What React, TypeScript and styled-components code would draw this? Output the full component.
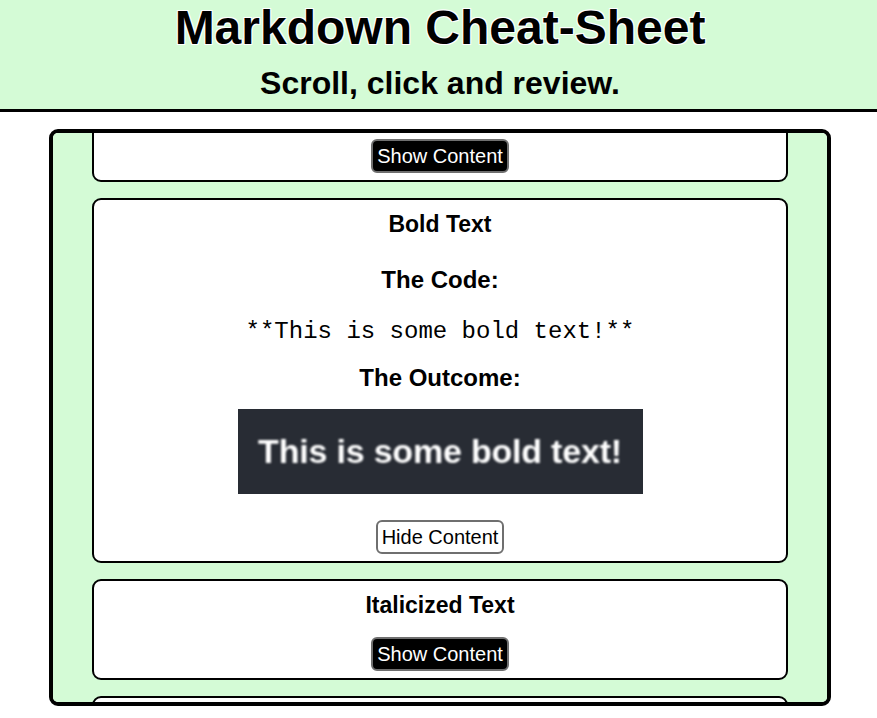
import { useState, useLayoutEffect, useRef } from 'react';
import styled, { createGlobalStyle } from 'styled-components';
import * as React from 'react';

interface Section {
  title: string;
  code: string;
  outcome: string;
  outcomeStyle?: React.CSSProperties;
}

const sections: Section[] = [
  {
    title: 'Headers',
    code: '# This is a header',
    outcome: 'This is a header',
  },
  {
    title: 'Bold Text',
    code: '**This is some bold text!**',
    outcome: 'This is some bold text!',
  },
  {
    title: 'Italicized Text',
    code: '*This is some italicized text!*',
    outcome: 'This is some italicized text!',
    outcomeStyle: { fontStyle: 'italic', fontWeight: 400 },
  },
  {
    title: 'Blockquotes',
    code: '> This is a blockquote',
    outcome: 'This is a blockquote',
  },
  {
    title: 'Links',
    code: '[GitHub](https://github.com)',
    outcome: 'GitHub',
  },
];

const GlobalStyle = createGlobalStyle`
  html, body {
    margin: 0;
    padding: 0;
    background: #ffffff;
    font-family: "Liberation Sans", Arial, Helvetica, sans-serif;
    color: #000;
  }
`;

const Header = styled.header`
  background: #d4fbd6;
  border-bottom: 3px solid #000;
  padding: 0 0 8px 3px;
  text-align: center;
`;

const Title = styled.h1`
  margin: 0;
  font-size: 48px;
  line-height: 56px;
  font-weight: 700;
  text-shadow: -1px -1px 0 #fff, 1px 1px 0 #fff, 1px -1px 0 #fff,
    -1px 1px 0 #fff;
`;

const Subtitle = styled.h2`
  margin: 9px 0 0;
  font-size: 32px;
  line-height: 36px;
  font-weight: 700;
`;

const Scroller = styled.main`
  margin: 17px 46px 0 49px;
  height: 577px;
  box-sizing: border-box;
  background: #d4fbd6;
  border: 4px solid #000;
  border-radius: 9px;
  overflow-y: scroll;
  scrollbar-width: none;
  padding: 16px 0;

  &::-webkit-scrollbar {
    display: none;
  }
`;

const Card = styled.section`
  width: 90%;
  margin: 0 auto 16px;
  box-sizing: border-box;
  background: #fff;
  border: 2px solid #000;
  border-radius: 9px;
  padding: 10px 0 7px;
  display: flex;
  flex-direction: column;
  align-items: center;
  text-align: center;
`;

const CardTitle = styled.h3`
  margin: 0;
  font-size: 23px;
  line-height: 28px;
  font-weight: 700;
`;

const Label = styled.h4<{ $gap: number }>`
  margin: ${(p) => p.$gap}px 0 0;
  font-size: 24px;
  line-height: 28px;
  font-weight: 700;
`;

const Code = styled.code`
  margin-top: 24px;
  font-family: "Liberation Mono", "Courier New", monospace;
  font-size: 24px;
  line-height: 28px;
  white-space: pre;
`;

// screenshot of rendered markdown, dark editor preview
const Outcome = styled.div`
  margin-top: 17px;
  width: 405px;
  height: 85px;
  background: #282c34;
  display: flex;
  align-items: center;
  justify-content: center;
`;

const OutcomeText = styled.span`
  color: #fff;
  font-family: "Liberation Sans", Arial, sans-serif;
  font-size: 34px;
  font-weight: 700;
  letter-spacing: -0.2px;
  filter: blur(0.9px);
`;

const Toggle = styled.button<{ $open: boolean }>`
  margin-top: ${(p) => (p.$open ? 26 : 18)}px;
  font-family: "Liberation Sans", Arial, sans-serif;
  font-size: 20px;
  line-height: 24px;
  padding: 3px 4px;
  border: 2px solid #6f6f6f;
  border-radius: 6px;
  background: ${(p) => (p.$open ? '#fff' : '#000')};
  color: ${(p) => (p.$open ? '#000' : '#fff')};
  cursor: pointer;
`;

const CheatCard: React.FC<{ section: Section; startOpen: boolean }> = ({
  section,
  startOpen,
}) => {
  const [open, setOpen] = useState(startOpen);

  return (
    <Card>
      <CardTitle>{section.title}</CardTitle>
      {open && (
        <>
          <Label $gap={28}>The Code:</Label>
          <Code>{section.code}</Code>
          <Label $gap={18}>The Outcome:</Label>
          <Outcome>
            <OutcomeText style={section.outcomeStyle}>{section.outcome}</OutcomeText>
          </Outcome>
        </>
      )}
      <Toggle $open={open} onClick={() => setOpen(!open)}>
        {open ? 'Hide Content' : 'Show Content'}
      </Toggle>
    </Card>
  );
};

export default function App() {
  const scrollRef = useRef<HTMLElement>(null);

  useLayoutEffect(() => {
    if (scrollRef.current) scrollRef.current.scrollTop = 68;
  }, []);

  return (
    <>
      <GlobalStyle />
      <Header>
        <Title>Markdown Cheat-Sheet</Title>
        <Subtitle>Scroll, click and review.</Subtitle>
      </Header>
      <Scroller ref={scrollRef}>
        {sections.map((s) => (
          <CheatCard key={s.title} section={s} startOpen={s.title === 'Bold Text'} />
        ))}
      </Scroller>
    </>
  );
}
